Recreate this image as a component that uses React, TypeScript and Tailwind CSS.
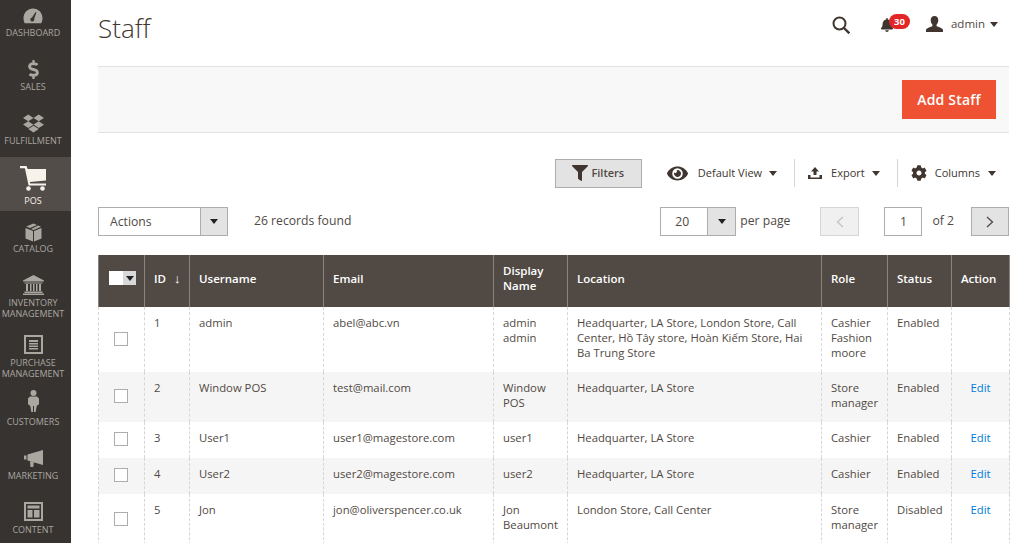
import React from "react";
import { FaDropbox, FaBell, FaFilter, FaEye, FaCog, FaDollarSign } from "react-icons/fa";

const Gauge = () => (
  <svg width="20" height="16" viewBox="0 0 20 16" fill="currentColor">
    <path fillRule="evenodd" d="M10 0.500C4.600 0.500 0.500 4.800 0.500 10.200c0 1.900.4 3.600 1.200 5h16.600c.8-1.400 1.200-3.100 1.200-5C19.500 4.800 15.400.5 10 .5zM9 9.500l3.600-5.500.8.4-2.200 6.400a2 2 0 1 1-2.200-1.300z" />
  </svg>
);
const Cart = () => (
  <svg width="26" height="25" viewBox="0 0 26 25" fill="currentColor">
    <path d="M0 0h6.500l1.200 3H26v11.500L9.800 16l.4 1.600H26v2H8.600L4.900 2.200H0z" />
    <circle cx="8.500" cy="22.500" r="2.300" />
    <circle cx="22.500" cy="22.500" r="2.300" />
  </svg>
);
const Box = () => (
  <svg width="17" height="19" viewBox="0 0 17 19" fill="currentColor">
    <path d="M8.500 0.500 12 2 5 5 1.200 3.500zM13.200 2.500 16 3.800 8.500 7 6 6zM.5 5l7.500 3v10.500L.5 15.500zM16.500 5v10.500L9 18.500V8z" />
  </svg>
);
const Bank = () => (
  <svg width="21" height="20" viewBox="0 0 21 20" fill="currentColor">
    <path d="M10.500 0 21 5.500v1H0v-1zM1.500 7.500h18v1h-18zM3 9h2v7H3zM7 9h1.500v7H7zM10 9h1.500v7H10zM13 9h1.500v7H13zM16 9h2v7h-2zM1.500 16.500h18V18h-18zM0 18.500h21V20H0z" />
  </svg>
);
const Purchase = () => (
  <svg width="19" height="19" viewBox="0 0 19 19" fill="currentColor">
    <path fillRule="evenodd" d="M0 0h19v19H0zM2 2v15h15V2z" />
    <path d="M5 5h9v2H5zM5 8h9v1.500H5zM5 10.500h9V12H5zM5 13h9v1.500H5z" />
  </svg>
);
const Person = () => (
  <svg width="11" height="22" viewBox="0 0 11 22" fill="currentColor">
    <circle cx="5.500" cy="3" r="3" />
    <path d="M2 6.500h7l2 2v6l-1.500.5-1 2-.8 5H6V16H5v6H3.300l-.8-5-1-2L0 14.500v-6z" />
  </svg>
);
const Megaphone = () => (
  <svg width="19" height="18" viewBox="0 0 19 18" fill="currentColor">
    <path d="M0 6.500h2.500v4H0zM3.500 5.500 19 1v15L3.500 11.500zM6 12.500l4 1-.4 1.500-.3 3H6.500z" />
  </svg>
);
const Content = () => (
  <svg width="19" height="19" viewBox="0 0 19 19" fill="currentColor">
    <path fillRule="evenodd" d="M0 0h19v19H0zM2 2v15h15V2z" />
    <path d="M3.500 3.500h12v3h-12zM3.500 8h5v7.500h-5zM10 8h5.500v7.500H10z" />
  </svg>
);
const Search = () => (
  <svg width="18" height="18" viewBox="0 0 18 18" fill="none" stroke="#41362f" strokeWidth="2">
    <circle cx="7.500" cy="7.500" r="6" />
    <path d="M12 12 17.300 17.300" strokeWidth="2.400" />
  </svg>
);
const Bust = () => (
  <svg width="17" height="16" viewBox="0 0 17 16" fill="#41362f">
    <path d="M8.500 0c2.500 0 3.800 1.800 3.800 4.200 0 1.800-.8 3.400-1.700 4.300v1.700c1.800.8 5.400 1.500 6.400 3.300V16H0v-2.500c1-1.800 4.600-2.500 6.400-3.300V8.500C5.500 7.600 4.700 6 4.700 4.200 4.700 1.800 6 0 8.500 0z" />
  </svg>
);
const Arrow = ({ className = "" }: { className?: string }) => (
  <span className={`inline-block w-0 h-0 border-x-[4px] border-x-transparent border-t-[5px] ${className}`} />
);

const nav: { label: React.ReactNode; icon: React.ReactNode; cls: string; lab: string; active?: boolean }[] = [
  { label: "DASHBOARD", icon: <Gauge />, cls: "h-[49px] pt-[4px]", lab: "mt-[-1px]" },
  { label: "SALES", icon: <FaDollarSign size={19} />, cls: "h-[54px] pt-[8px]", lab: "mt-0" },
  { label: "FULFILLMENT", icon: <FaDropbox size={21} />, cls: "h-[54px] pt-[8px]", lab: "mt-0" },
  { label: "POS", icon: <Cart />, cls: "h-[54px] pt-[9px]", lab: "mt-[5px]", active: true },
  { label: "CATALOG", icon: <Box />, cls: "h-[54px] pt-[9px]", lab: "mt-[-1px]" },
  { label: <>INVENTORY<br />MANAGEMENT</>, icon: <Bank />, cls: "h-[60px] pt-[8px]", lab: "mt-0" },
  { label: <>PURCHASE<br />MANAGEMENT</>, icon: <Purchase />, cls: "h-[59px] pt-[7px]", lab: "mt-[1px]" },
  { label: "CUSTOMERS", icon: <Person />, cls: "h-[54px] pt-[5px]", lab: "mt-[3px]" },
  { label: "MARKETING", icon: <Megaphone />, cls: "h-[54px] pt-[8px]", lab: "mt-0" },
  { label: "CONTENT", icon: <Content />, cls: "h-[54px] pt-[7px]", lab: "mt-[1px]" },
];

type Row = { id: number; user: React.ReactNode; email: string; name: React.ReactNode; loc: React.ReactNode; role: React.ReactNode; status: string; edit: boolean; h: string; alt: boolean };
const rows: Row[] = [
  { id: 1, user: "admin", email: "abel@abc.vn", name: <>admin<br />admin</>, loc: <>Headquarter, LA Store, London Store, Call<br />Center, Hồ Tây store, Hoàn Kiếm Store, Hai<br />Ba Trung Store</>, role: <>Cashier<br />Fashion<br />moore</>, status: "Enabled", edit: false, h: "h-[65px]", alt: false },
  { id: 2, user: "Window POS", email: "test@mail.com", name: <>Window<br />POS</>, loc: "Headquarter, LA Store", role: <>Store<br />manager</>, status: "Enabled", edit: true, h: "h-[50px]", alt: true },
  { id: 3, user: "User1", email: "user1@magestore.com", name: "user1", loc: "Headquarter, LA Store", role: "Cashier", status: "Enabled", edit: true, h: "h-[36px]", alt: false },
  { id: 4, user: "User2", email: "user2@magestore.com", name: "user2", loc: "Headquarter, LA Store", role: "Cashier", status: "Enabled", edit: true, h: "h-[36px]", alt: true },
  { id: 5, user: "Jon", email: "jon@oliverspencer.co.uk", name: <>Jon<br />Beaumont</>, loc: "London Store, Call Center", role: <>Store<br />manager</>, status: "Disabled", edit: true, h: "h-[51px]", alt: false },
];

const cols = [46, 45, 134, 170, 74, 254, 66, 64, 58];
const th = "border-x border-[#8a837d] px-[9px] pb-[6px] text-left align-middle font-semibold text-[11.5px] leading-[15px] text-white whitespace-nowrap";
const td = "border-x border-dashed border-[#d6d6d6] px-[9px] pt-[8px] align-top";

export default function App() {
  return (
    <div className="flex h-[543px] w-[1024px] overflow-hidden bg-white text-[#41362f] font-['Open_Sans',sans-serif]">
      <aside className="w-[71px] shrink-0 bg-[#373330] text-[#aaa6a0]">
        {nav.map((n, i) => (
          <div key={i} className={`flex flex-col items-center pr-[5px] ${n.cls} ${n.active ? "bg-[#524d49] text-[#f7f3eb]" : ""}`}>
            <div className="flex h-[24px] items-center justify-center">{n.icon}</div>
            <div className={`whitespace-nowrap text-center text-[9px] leading-[11px] ${n.lab}`}>{n.label}</div>
          </div>
        ))}
      </aside>
      <main className="flex-1 min-w-0 pl-[27px] pr-[15px]">
        <header className="flex h-[66px] items-start justify-between">
          <h1 className="pt-[10px] text-[26px] font-light leading-[36px] text-[#41362f]">Staff</h1>
          <div className="flex items-center pt-[14px] pr-[11px] text-[11.5px] text-[#41362f]">
            <span className="ml-px mt-px"><Search /></span>
            <div className="relative ml-[30px] flex h-[20px] w-[30px] items-center">
              <FaBell size={14} className="mt-px text-[#41362f]" />
              <span className="absolute left-[9px] top-0 rounded-full bg-[#e22626] px-[5px] text-[9.5px] font-bold leading-[15px] text-white">30</span>
            </div>
            <span className="ml-[16px]"><Bust /></span>
            <span className="ml-[8px] text-[#514943]">admin</span>
            <Arrow className="ml-[5px] border-t-[#41362f]" />
          </div>
        </header>
        <div className="flex h-[67px] items-center justify-end border-y border-[#e3e3e3] bg-[#f8f8f8] pr-[13px]">
          <button className="h-[39px] w-[94px] bg-[#ee5233] text-[14px] font-semibold tracking-[0.2px] text-white">Add Staff</button>
        </div>
        <div className="mt-[20px] flex h-[40px] items-center justify-end text-[11px] text-[#41362f]">
          <button className="mr-[25px] flex h-[29px] w-[87px] items-center justify-center gap-[3px] border border-[#adadad] bg-[#e3e3e3] font-semibold text-[#514943]">
            <FaFilter size={16} className="text-[#41362f]" /> Filters
          </button>
          <FaEye size={21} />
          <span className="ml-[10px]">Default View</span>
          <Arrow className="ml-[7px] border-t-[#41362f]" />
          <span className="ml-[17px] mr-[12px] h-[28px] border-l border-[#d6d6d6]" />
          <svg width="16" height="14" viewBox="0 0 16 14" fill="#41362f"><path d="M8 1 12 5.500H9.500V9h-3V5.500H4zM1 9h2.500v2.500h9V9H15v4H1z" /></svg>
          <span className="ml-[8px]">Export</span>
          <Arrow className="ml-[7px] border-t-[#41362f]" />
          <span className="ml-[17px] mr-[13px] h-[28px] border-l border-[#d6d6d6]" />
          <FaCog size={16} />
          <span className="ml-[8px]">Columns</span>
          <Arrow className="ml-[8px] mr-[13px] border-t-[#41362f]" />
        </div>
        <div className="mt-[14px] flex h-[29px] items-center text-[12.2px] text-[#514943]">
          <div className="flex h-[29px] w-[130px] border border-[#adadad]">
            <span className="flex-1 pl-[11px] leading-[27px]">Actions</span>
            <span className="flex w-[27px] items-center justify-center border-l border-[#adadad] bg-[#e3e3e3]"><Arrow className="border-t-[#222]" /></span>
          </div>
          <span className="ml-[26px]">26 records found</span>
          <div className="ml-auto flex h-[29px] w-[76px] border border-[#adadad]">
            <span className="flex-1 pr-[4px] text-center leading-[27px]">20</span>
            <span className="flex w-[28px] items-center justify-center border-l border-[#adadad] bg-[#e3e3e3]"><Arrow className="border-t-[#222]" /></span>
          </div>
          <span className="ml-[4px]">per page</span>
          <span className="ml-[30px] flex h-[29px] w-[39px] items-center justify-center border border-[#d6d6d6] bg-[#f0f0f0]">
            <svg width="8" height="12" viewBox="0 0 8 12" fill="none" stroke="#c2c2c2" strokeWidth="1.3"><path d="M7 1 1.500 6 7 11" /></svg>
          </span>
          <span className="ml-[25px] h-[29px] w-[38px] border border-[#adadad] text-center leading-[27px]">1</span>
          <span className="ml-[10px]">of 2</span>
          <span className="ml-[17px] flex h-[29px] w-[38px] items-center justify-center border border-[#adadad] bg-[#e3e3e3]">
            <svg width="8" height="12" viewBox="0 0 8 12" fill="none" stroke="#514943" strokeWidth="1.3"><path d="M1 1 6.500 6 1 11" /></svg>
          </span>
        </div>
        <table className="mt-[19px] w-[911px] table-fixed border-collapse text-[11.3px] leading-[15px] text-[#514943]">
          <colgroup>{cols.map((c, i) => <col key={i} style={{ width: c }} />)}</colgroup>
          <thead>
            <tr className="h-[52px] bg-[#514943]">
              <th className={th}>
                <span className="ml-px flex h-[14px] w-[27px]">
                  <span className="w-[14px] bg-white" />
                  <span className="flex flex-1 items-center justify-center bg-[#d9d9d9]"><Arrow className="border-t-[#222]" /></span>
                </span>
              </th>
              <th className={th}>ID <span className="ml-[5px] text-[13px] font-normal">↓</span></th>
              <th className={th}>Username</th>
              <th className={th}>Email</th>
              <th className={th}>Display<br />Name</th>
              <th className={th}>Location</th>
              <th className={th}>Role</th>
              <th className={th}>Status</th>
              <th className={th}>Action</th>
            </tr>
          </thead>
          <tbody>
            {rows.map((r) => (
              <tr key={r.id} className={`${r.h} ${r.alt ? "bg-[#f5f5f5]" : "bg-white"}`}>
                <td className="border-x border-dashed border-[#d6d6d6] align-middle">
                  <span className="mx-auto -mt-[2px] block h-[14px] w-[14px] -translate-x-px border border-[#adadad] bg-white" />
                </td>
                <td className={td}>{r.id}</td>
                <td className={td}>{r.user}</td>
                <td className={td}>{r.email}</td>
                <td className={td}>{r.name}</td>
                <td className={`${td} whitespace-nowrap`}>{r.loc}</td>
                <td className={td}>{r.role}</td>
                <td className={td}>{r.status}</td>
                <td className={`${td} text-center text-[#007bdb]`}>{r.edit ? "Edit" : ""}</td>
              </tr>
            ))}
          </tbody>
        </table>
      </main>
    </div>
  );
}
